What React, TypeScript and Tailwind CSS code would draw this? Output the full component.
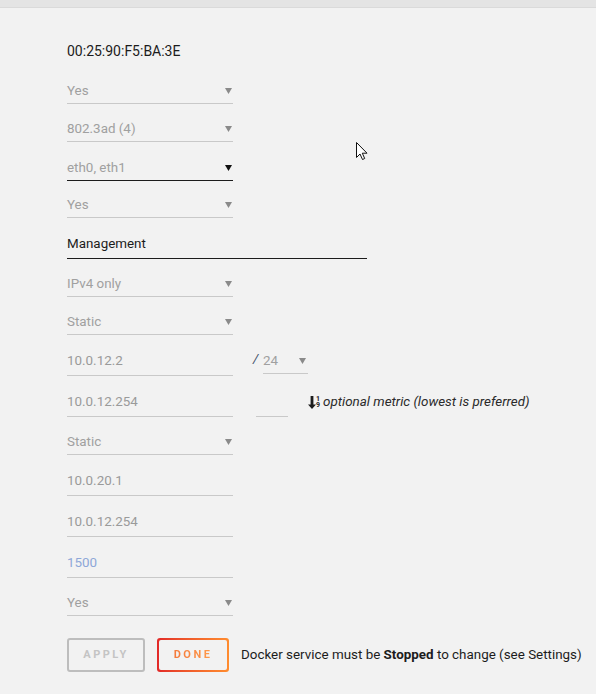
import React from "react";

const font = { fontFamily: "Roboto, 'Liberation Sans', sans-serif" };

function Caret({ dark = false }: { dark?: boolean }) {
  return (
    <svg width="7" height="6" viewBox="0 0 7 6" className="shrink-0">
      <path d="M0 0H7L3.5 6Z" fill={dark ? "#111111" : "#8a8a8a"} />
    </svg>
  );
}

function Select({
  label,
  h,
  dark = false,
}: {
  label: string;
  h: string;
  dark?: boolean;
}) {
  return (
    <div className={`flex items-end ${h}`}>
      <div
        className={`flex h-[26px] w-[166px] items-center justify-between border-b pr-[1px] ${
          dark ? "border-[#1c1c1c]" : "border-[#c9c9c9]"
        }`}
      >
        <span className="pt-[1px] text-[13.4px] leading-[20px] text-[#a0a0a0]">{label}</span>
        <Caret dark={dark} />
      </div>
    </div>
  );
}

function Input({
  value,
  h,
  color = "text-[#9a9a9a]",
}: {
  value: string;
  h: string;
  color?: string;
}) {
  return (
    <div className={`flex items-end ${h}`}>
      <div className="flex h-[30px] w-[166px] items-center border-b border-[#c9c9c9]">
        <span className={`pt-[1px] text-[13.4px] leading-[20px] ${color}`}>{value}</span>
      </div>
    </div>
  );
}

export default function App() {
  return (
    <div className="relative h-[694px] w-[596px] overflow-hidden bg-[#f2f2f2]" style={font}>
      <div className="h-[8px] border-b border-[#dadada] bg-[#e4e4e4]" />
      <div className="pl-[67px]">
        <div className="h-[58px] pt-[33px]">
          <div className="text-[14px] leading-[20px] text-[#1c1c1c]">00:25:90:F5:BA:3E</div>
        </div>
        <Select label="Yes" h="h-[38px]" />
        <Select label="802.3ad (4)" h="h-[38px]" />
        <Select label="eth0, eth1" h="h-[39px]" dark />
        <Select label="Yes" h="h-[37px]" />
        <div className="flex h-[41px] items-end">
          <div className="flex h-[30px] w-[300px] items-center border-b border-[#1c1c1c]">
            <span className="pt-[1px] text-[13.4px] leading-[20px] text-[#1c1c1c]">Management</span>
          </div>
        </div>
        <Select label="IPv4 only" h="h-[38px]" />
        <Select label="Static" h="h-[38px]" />
        <div className="flex h-[41px] items-end">
          <div className="flex h-[30px] w-[166px] items-center border-b border-[#c9c9c9]">
            <span className="pt-[1px] text-[13.4px] leading-[20px] text-[#9a9a9a]">10.0.12.2</span>
          </div>
          <span className="mb-[7px] ml-[20px] w-[10px] text-[13.4px] italic leading-[20px] text-[#44526a]">/</span>
          <div className="mb-[2px] flex h-[26px] w-[45px] items-center justify-between border-b border-[#c9c9c9] pr-[2px]">
            <span className="pt-[1px] text-[13.4px] leading-[20px] text-[#a0a0a0]">24</span>
            <Caret />
          </div>
        </div>
        <div className="flex h-[41px] items-end">
          <div className="flex h-[30px] w-[166px] items-center border-b border-[#c9c9c9]">
            <span className="pt-[1px] text-[13.4px] leading-[20px] text-[#9a9a9a]">10.0.12.254</span>
          </div>
          <div className="ml-[23px] h-[30px] w-[32px] border-b border-[#c9c9c9]" />
          <div className="ml-[20px] flex h-[30px] items-center gap-[3px]">
            <span className="flex items-center">
              <svg width="8" height="13" viewBox="0 0 8 13">
                <path d="M2.6 0H5.4V8.5H8L4 13L0 8.5H2.6Z" fill="#1c1c1c" />
              </svg>
              <span className="flex flex-col text-[7px] font-bold leading-[6.5px] text-[#1c1c1c]">
                <span>1</span>
                <span>9</span>
              </span>
            </span>
            <span className="text-[13.4px] italic leading-[20px] text-[#2a2a2a]">optional metric (lowest is preferred)</span>
          </div>
        </div>
        <Select label="Static" h="h-[38px]" />
        <Input value="10.0.20.1" h="h-[41px]" />
        <Input value="10.0.12.254" h="h-[41px]" />
        <Input value="1500" h="h-[41px]" color="text-[#8ea7d8]" />
        <Select label="Yes" h="h-[38px]" />
        <div className="mt-[22px] flex items-center">
          <div className="flex h-[34px] w-[78px] items-center justify-center rounded-[3px] border-2 border-[#bdbdbd] pt-[1px] text-[11px] font-bold tracking-[2.5px] text-[#c4c4c4]">
            APPLY
          </div>
          <div className="ml-[12px] h-[34px] w-[72px] rounded-[3px] bg-gradient-to-r from-[#e22828] to-[#ff8c2f] p-[2px]">
            <div className="flex h-full w-full items-center justify-center rounded-[2px] bg-[#f2f2f2] pt-[1px]">
              <span className="bg-gradient-to-r from-[#f47a3c] to-[#ff9a4a] bg-clip-text text-[11px] font-bold tracking-[2.5px] text-transparent">
                DONE
              </span>
            </div>
          </div>
          <span className="ml-[12px] text-[13.4px] leading-[20px] text-[#1c1c1c]">
            Docker service must be <b>Stopped</b> to change (see Settings)
          </span>
        </div>
      </div>
      <svg className="absolute left-[356px] top-[142px]" width="12" height="19" viewBox="0 0 12 19">
        <path
          d="M0.5 0.5V15.5L4 12L6.5 17.5L8.7 16.5L6.3 11.2H11Z"
          fill="#ffffff"
          stroke="#111111"
          strokeWidth="1"
          strokeLinejoin="round"
        />
      </svg>
    </div>
  );
}
